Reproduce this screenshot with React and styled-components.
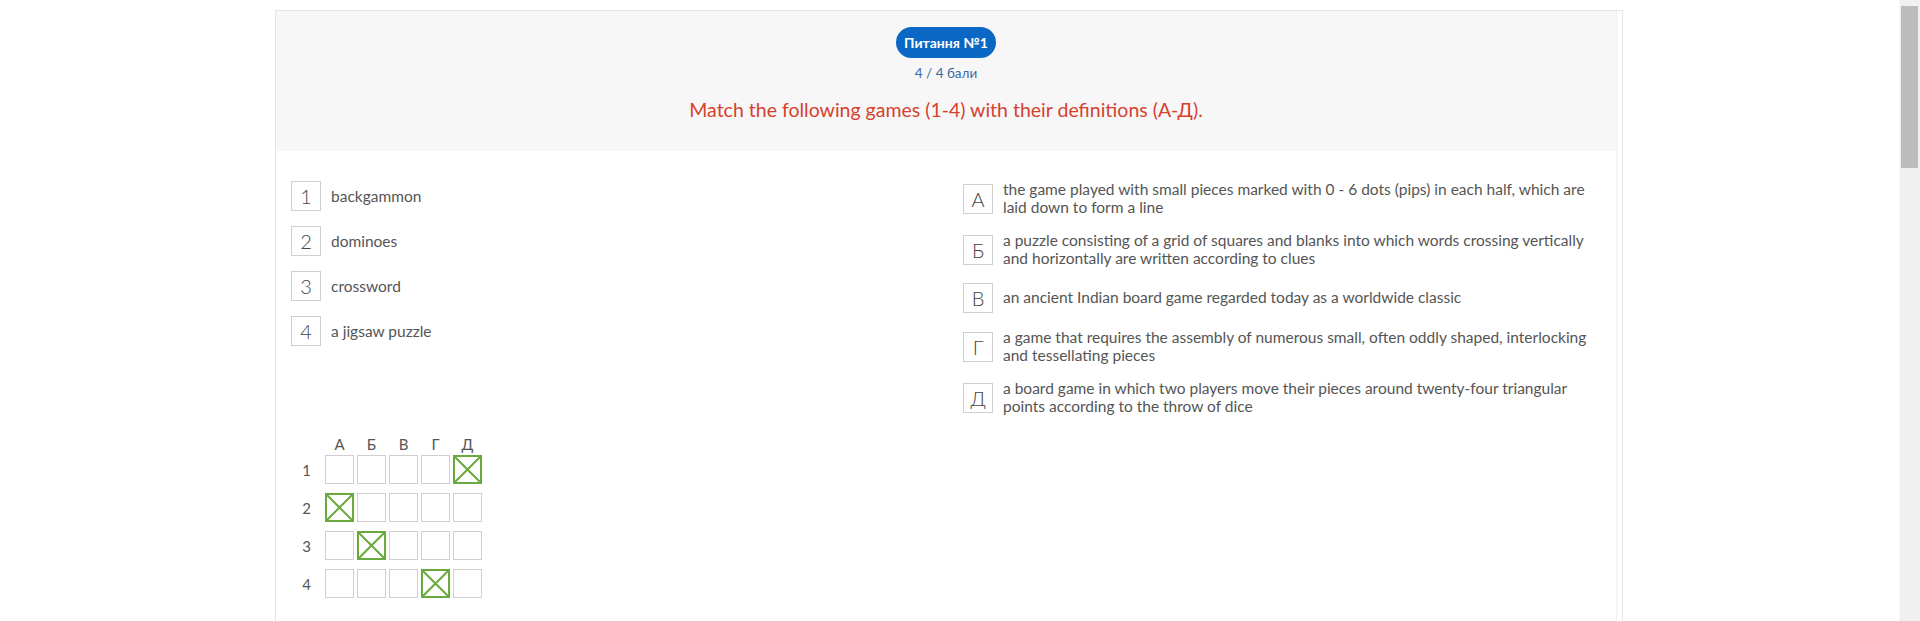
import React from 'react';
import styled, { createGlobalStyle } from 'styled-components';

const GlobalStyle = createGlobalStyle`
  html, body {
    margin: 0;
    padding: 0;
    background: #fff;
    font-family: Lato, "Open Sans", sans-serif;
  }
`;

/* the browser scrollbar seen on the right of the capture */
const ScrollTrack = styled.div`
  position: fixed;
  top: 0;
  right: 0;
  bottom: 0;
  width: 20px;
  background: #f0f0f0;
  border-left: 1px solid #f7f7f7;
`;

const ScrollThumb = styled.div`
  margin: 6px 2px 0 1px;
  height: 162px;
  background: #bcbcbc;
`;

const Page = styled.div`
  padding-top: 10px;
  min-height: 2380px;
`;

const Card = styled.div`
  width: 1348px;
  min-height: 2370px;
  margin-left: 275px;
  border: 1px solid #e4e4e4;
  border-bottom: none;
  box-sizing: border-box;
`;

const Inner = styled.div`
  margin-right: 5px;
  min-height: 2370px;
  border-right: 1px solid #efefef;
`;

const Header = styled.div`
  background: #f7f7f7;
  padding: 16px 0 29px;
  display: flex;
  flex-direction: column;
  align-items: center;
`;

const Badge = styled.div`
  height: 31px;
  line-height: 31px;
  padding: 0 8px;
  border-radius: 16px;
  background: #0b67c4;
  color: #fff;
  font-size: 14px;
  font-weight: 700;
`;

const Score = styled.div`
  margin-top: 6px;
  line-height: 18px;
  font-size: 13.5px;
  color: #3b68a6;
`;

const Title = styled.div`
  margin-top: 16px;
  line-height: 24px;
  font-size: 19.5px;
  color: #d6412f;
`;

const Body = styled.div`
  padding: 30px 15px 0 15px;
`;

const Columns = styled.div`
  display: grid;
  grid-template-columns: 1fr 1fr;
`;

const List = styled.div`
  display: flex;
  flex-direction: column;
  gap: ${p => p.$gap}px;
  padding-left: ${p => p.$indent}px;
`;

const Item = styled.div`
  display: flex;
  align-items: center;
  gap: 10px;
  min-height: 30px;
`;

const Key = styled.div`
  flex: none;
  width: 28px;
  height: 28px;
  border: 1px solid #cfcfcf;
  display: flex;
  align-items: center;
  justify-content: center;
  font-size: 20px;
  font-weight: 300;
  color: #444;
`;

const Term = styled.div`
  font-size: 15.5px;
  color: #555;
`;

const Definition = styled.div`
  font-size: 15.5px;
  line-height: 17.5px;
  color: #555;
  max-width: 592px;
`;

const Matrix = styled.div`
  margin-top: 20px;
  display: flex;
  flex-direction: column;
  gap: 9px;
`;

const MatrixRow = styled.div`
  display: flex;
  align-items: center;
  gap: 3px;
  height: ${p => (p.$head ? 18 : 29)}px;
  margin-bottom: ${p => (p.$head ? -7 : 0)}px;
`;

const RowLabel = styled.div`
  width: 31px;
  text-align: center;
  font-size: 15px;
  color: #555;
`;

const ColLabel = styled.div`
  width: 29px;
  text-align: center;
  font-size: 15px;
  line-height: 18px;
  color: #555;
`;

const Cell = styled.div`
  width: 29px;
  height: 29px;
  box-sizing: border-box;
  border: ${p => (p.$on ? '2px solid #6aa93d' : '1px solid #cfcfcf')};
  display: flex;
`;

const terms = ['backgammon', 'dominoes', 'crossword', 'a jigsaw puzzle'];

const letters = ['А', 'Б', 'В', 'Г', 'Д'];

const definitions = [
  'the game played with small pieces marked with 0 - 6 dots (pips) in each half, which are laid down to form a line',
  'a puzzle consisting of a grid of squares and blanks into which words crossing vertically and horizontally are written according to clues',
  'an ancient Indian board game regarded today as a worldwide classic',
  'a game that requires the assembly of numerous small, often oddly shaped, interlocking and tessellating pieces',
  'a board game in which two players move their pieces around twenty-four triangular points according to the throw of dice',
];

const answers = [4, 0, 1, 3];

const Cross = () => (
  <svg width="25" height="25" viewBox="0 0 25 25">
    <path d="M0 0L25 25M25 0L0 25" stroke="#6aa93d" strokeWidth="2" />
  </svg>
);

export default function App() {
  return (
    <Page>
      <GlobalStyle />
      <Card>
        <Inner>
          <Header>
            <Badge>Питання №1</Badge>
            <Score>4 / 4 бали</Score>
            <Title>Match the following games (1-4) with their definitions (А-Д).</Title>
          </Header>
          <Body>
            <Columns>
              <List $gap={15} $indent={0}>
                {terms.map((t, i) => (
                  <Item key={t}>
                    <Key>{i + 1}</Key>
                    <Term>{t}</Term>
                  </Item>
                ))}
              </List>
              <List $gap={16} $indent={17}>
                {definitions.map((d, i) => (
                  <Item key={i}>
                    <Key>{letters[i]}</Key>
                    <Definition>{d}</Definition>
                  </Item>
                ))}
              </List>
            </Columns>
            <Matrix>
              <MatrixRow $head>
                <RowLabel />
                {letters.map(l => <ColLabel key={l}>{l}</ColLabel>)}
              </MatrixRow>
              {answers.map((a, r) => (
                <MatrixRow key={r}>
                  <RowLabel>{r + 1}</RowLabel>
                  {letters.map((l, c) => (
                    <Cell key={l} $on={c === a}>{c === a && <Cross />}</Cell>
                  ))}
                </MatrixRow>
              ))}
            </Matrix>
          </Body>
        </Inner>
      </Card>
      <ScrollTrack>
        <ScrollThumb />
      </ScrollTrack>
    </Page>
  );
}
